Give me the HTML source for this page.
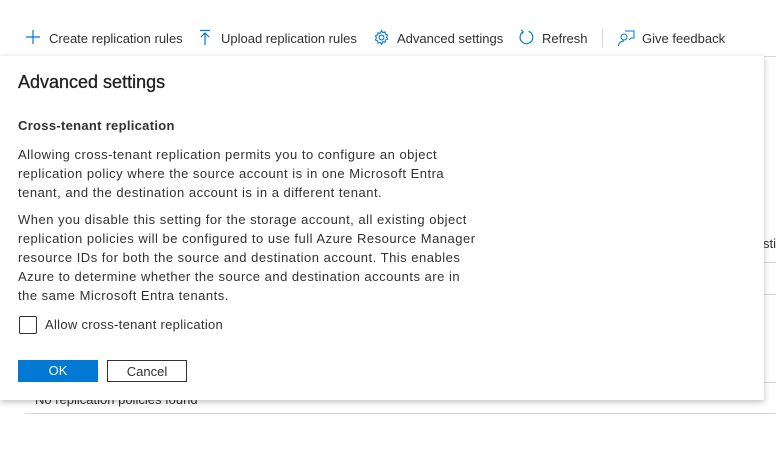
<!DOCTYPE html>
<html><head><style>
body{margin:0;width:776px;height:449px;background:#fff;font-family:"Liberation Sans",sans-serif;color:#323130;overflow:hidden;position:relative}
.tb{position:absolute;top:29px;left:0;height:20px;font-size:13px;white-space:nowrap}
.tb span{position:absolute;top:2px}
.tb svg{position:absolute;top:0}
.line{position:absolute;height:1px;background:#d6d6d6}
.panel{position:absolute;left:0;top:56px;width:764px;height:344px;background:#fff;box-shadow:0 2px 6px rgba(0,0,0,.25)}
.p{position:absolute;left:18px;font-size:13px;line-height:19px;white-space:nowrap;letter-spacing:0.5px}
.btn{position:absolute;top:304px;height:22px;font-size:13px;text-align:center;line-height:22px;box-sizing:border-box}
</style></head><body>
<div class="tb">
<svg style="left:25px" width="16" height="16" viewBox="0 0 16 16"><path d="M8 1v14M1 8h14" stroke="#0078d4" stroke-width="1.2"/></svg>
<span style="left:49px">Create replication rules</span>
<svg style="left:197px" width="16" height="16" viewBox="0 0 16 16"><path d="M3 1.5h10M8 4v12M4 8l4-4 4 4" stroke="#0078d4" stroke-width="1.2" fill="none"/></svg>
<span style="left:221px">Upload replication rules</span>
<svg style="left:373px" width="17" height="17" viewBox="0 0 16 16"><circle cx="8" cy="8" r="2.3" stroke="#0078d4" fill="none"/><path d="M8 1.5l1.2 1.8 2.1-.6.4 2.1 2 .9-.9 1.9.9 1.9-2 .9-.4 2.1-2.1-.6L8 14.5l-1.2-1.8-2.1.6-.4-2.1-2-.9.9-1.9-.9-1.9 2-.9.4-2.1 2.1.6z" stroke="#0078d4" fill="none"/></svg>
<span style="left:397px">Advanced settings</span>
<svg style="left:518px" width="17" height="17" viewBox="0 0 16 16"><path d="M10 2.2A6 6 0 1 1 5 2.6M5 2.6L3 1M5 2.6L3.5 4.5" stroke="#0078d4" stroke-width="1.1" fill="none"/></svg>
<span style="left:542px">Refresh</span>
<div style="position:absolute;left:602px;top:0;width:1px;height:18px;background:#d6d6d6"></div>
<svg style="left:617px" width="18" height="18" viewBox="0 0 18 18"><circle cx="7" cy="8" r="3" stroke="#0078d4" fill="none"/><path d="M1.5 17c0-3 2.5-5 5.5-5M8 2h9v7h-3l-2 2" stroke="#0078d4" fill="none"/></svg>
<span style="left:642px">Give feedback</span>
</div>
<div class="line" style="left:18px;top:56px;width:758px"></div>
<div style="position:absolute;left:752px;top:76px;font-size:12px">s-</div>
<div style="position:absolute;left:763px;top:236px;font-size:13px">sti</div>
<div class="line" style="left:764px;top:262px;width:12px"></div>
<div class="line" style="left:764px;top:294px;width:12px"></div>
<div class="line" style="left:764px;top:382px;width:12px"></div>
<div style="position:absolute;left:35px;top:392px;font-size:13px;color:#323130">No replication policies found</div>
<div class="line" style="left:25px;top:413px;width:751px"></div>
<div class="panel">
<div style="position:absolute;left:18px;top:16px;font-size:18px;color:#201f1e;-webkit-text-stroke:0.3px #201f1e">Advanced settings</div>
<div class="p" style="top:60px;font-weight:bold;letter-spacing:0.3px">Cross-tenant replication</div>
<div class="p" style="top:89px">Allowing cross-tenant replication permits you to configure an object<br>replication policy where the source account is in one Microsoft Entra<br>tenant, and the destination account is in a different tenant.</div>
<div class="p" style="top:154px">When you disable this setting for the storage account, all existing object<br>replication policies will be configured to use full Azure Resource Manager<br>resource IDs for both the source and destination account. This enables<br>Azure to determine whether the source and destination accounts are in<br>the same Microsoft Entra tenants.</div>
<div style="position:absolute;left:19px;top:260px;border:1px solid #323130;border-radius:2px;box-sizing:border-box;width:18px;height:18px"></div>
<div class="p" style="left:45px;top:259px;letter-spacing:0.3px">Allow cross-tenant replication</div>
<div class="btn" style="left:18px;width:80px;background:#0078d4;color:#fff">OK</div>
<div class="btn" style="left:107px;width:80px;border:1px solid #323130">Cancel</div>
</div>
</body></html>
